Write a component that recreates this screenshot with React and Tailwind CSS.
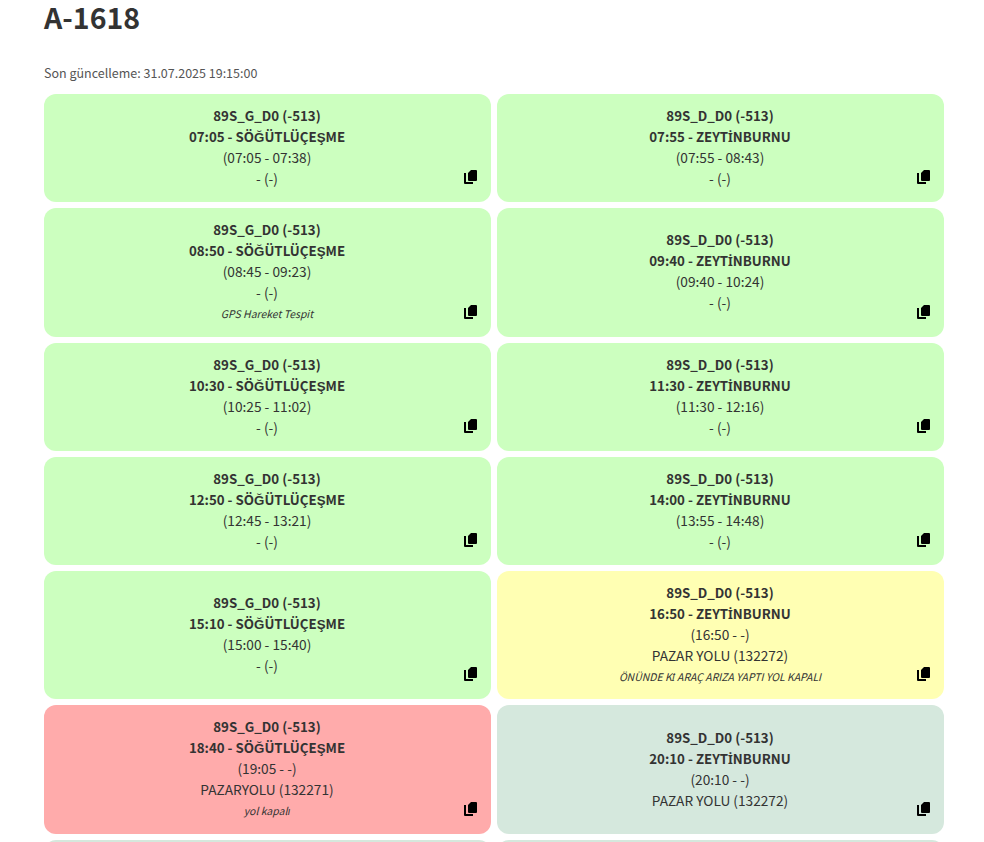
const cards = [
  { code: '89S_G_D0 (-513)', title: '07:05 - SÖĞÜTLÜÇEŞME', time: '(07:05 - 07:38)', stop: '- (-)', color: 'bg-[#ccffbf]' },
  { code: '89S_D_D0 (-513)', title: '07:55 - ZEYTİNBURNU', time: '(07:55 - 08:43)', stop: '- (-)', color: 'bg-[#ccffbf]' },
  { code: '89S_G_D0 (-513)', title: '08:50 - SÖĞÜTLÜÇEŞME', time: '(08:45 - 09:23)', stop: '- (-)', note: 'GPS Hareket Tespit', color: 'bg-[#ccffbf]' },
  { code: '89S_D_D0 (-513)', title: '09:40 - ZEYTİNBURNU', time: '(09:40 - 10:24)', stop: '- (-)', color: 'bg-[#ccffbf]' },
  { code: '89S_G_D0 (-513)', title: '10:30 - SÖĞÜTLÜÇEŞME', time: '(10:25 - 11:02)', stop: '- (-)', color: 'bg-[#ccffbf]' },
  { code: '89S_D_D0 (-513)', title: '11:30 - ZEYTİNBURNU', time: '(11:30 - 12:16)', stop: '- (-)', color: 'bg-[#ccffbf]' },
  { code: '89S_G_D0 (-513)', title: '12:50 - SÖĞÜTLÜÇEŞME', time: '(12:45 - 13:21)', stop: '- (-)', color: 'bg-[#ccffbf]' },
  { code: '89S_D_D0 (-513)', title: '14:00 - ZEYTİNBURNU', time: '(13:55 - 14:48)', stop: '- (-)', color: 'bg-[#ccffbf]' },
  { code: '89S_G_D0 (-513)', title: '15:10 - SÖĞÜTLÜÇEŞME', time: '(15:00 - 15:40)', stop: '- (-)', color: 'bg-[#ccffbf]' },
  { code: '89S_D_D0 (-513)', title: '16:50 - ZEYTİNBURNU', time: '(16:50 - -)', stop: 'PAZAR YOLU (132272)', note: 'ÖNÜNDE Kİ ARAÇ ARIZA YAPTI YOL KAPALI', color: 'bg-[#ffffb3]' },
  { code: '89S_G_D0 (-513)', title: '18:40 - SÖĞÜTLÜÇEŞME', time: '(19:05 - -)', stop: 'PAZARYOLU (132271)', note: 'yol kapalı', color: 'bg-[#ffabab]' },
  { code: '89S_D_D0 (-513)', title: '20:10 - ZEYTİNBURNU', time: '(20:10 - -)', stop: 'PAZAR YOLU (132272)', color: 'bg-[#d5e8dd]' },
  { color: 'bg-[#d5e8dd]' },
  { color: 'bg-[#d5e8dd]' },
];

// the CJK font misplaces the dot on İ, so that one letter comes from another family
const Tr = ({ text = '' }) =>
  text.split('İ').map((part, i) => (
    <span key={i}>
      {i > 0 && <span className="font-['Noto_Sans'] text-[0.92em]">İ</span>}
      {part}
    </span>
  ));

const CopyIcon = () => (
  <svg width="13" height="14" viewBox="0 0 13 14" className="absolute right-[14px] bottom-[18px]">
    <path d="M0 3h2v9h7v2H1a1 1 0 0 1-1-1z" fill="#000" />
    <path d="M7 0h5a1 1 0 0 1 1 1v9a1 1 0 0 1-1 1H5a1 1 0 0 1-1-1V3z" fill="#000" />
  </svg>
);

const Card = ({ card }) => (
  <div className={`relative flex min-h-[108px] flex-col items-center justify-center rounded-xl pl-3 pr-[13px] pt-[11px] pb-[13px] text-center text-[13.7px] leading-[21px] text-[#333333] ${card.color}`}>
    <div className="h-[21px] text-[13.3px] font-bold"><Tr text={card.code} /></div>
    <div className="h-[21px] text-[13.3px] font-bold"><Tr text={card.title} /></div>
    <div className="h-[21px]"><Tr text={card.time} /></div>
    <div className="h-[21px]"><Tr text={card.stop} /></div>
    {card.note && <div className="h-[20.7px] text-[10.45px] leading-[22.7px] italic"><Tr text={card.note} /></div>}
    {card.code && <CopyIcon />}
  </div>
);

export default function App() {
  return (
    <div className="h-[842px] overflow-hidden bg-white pl-11 pr-10 font-['Noto_Sans_CJK_SC',sans-serif] text-[#333333]">
      <h1 className="h-[40px] text-[28.5px] font-bold leading-[34px]">A-1618</h1>
      <p className="mt-[23px] text-[12.5px] leading-[20px] text-[#555555]">Son güncelleme: 31.07.2025 19:15:00</p>
      <div className="mt-[11px] grid grid-cols-2 gap-1.5">
        {cards.map((card, i) => (
          <Card key={i} card={card} />
        ))}
      </div>
    </div>
  );
}
